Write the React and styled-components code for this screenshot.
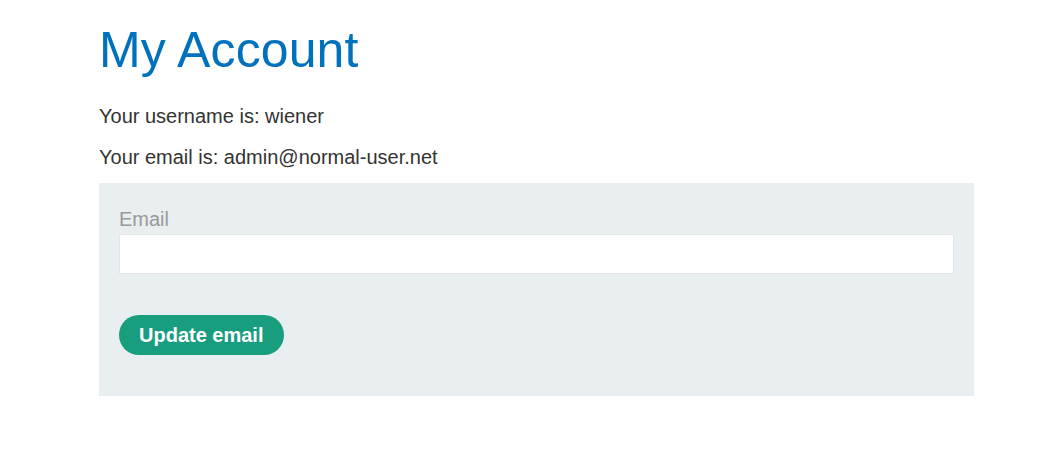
import React from "react";
import styled, { createGlobalStyle } from "styled-components";

const GlobalStyle = createGlobalStyle`
  html, body {
    margin: 0;
    padding: 0;
    background: #fff;
  }

  body {
    font-family: "Liberation Sans", Arial, sans-serif;
    font-size: 20px;
    color: #333332;
  }
`;

export default function App() {
  return (
    <>
      <GlobalStyle />
      <Page>
        <Title>My Account</Title>
        <Line>Your username is: wiener</Line>
        <Line>Your email is: admin@normal-user.net</Line>
        <Form onSubmit={(e) => e.preventDefault()}>
          <Label htmlFor="email">Email</Label>
          <Input id="email" name="email" type="email" />
          <Button type="submit">Update email</Button>
        </Form>
      </Page>
    </>
  );
}

const Page = styled.div`
  width: 875px;
  padding: 22px 0 0 99px;
  display: flex;
  flex-direction: column;
`;

const Title = styled.h1`
  margin: 0 0 27px;
  font-size: 50px;
  font-weight: 400;
  line-height: 56px;
  letter-spacing: 0.1px;
  color: #0071bc;
`;

const Line = styled.p`
  margin: 0 0 19px;
  line-height: 22px;
`;

const Form = styled.form`
  margin-top: -4px;
  background: #e9eef1;
  padding: 25px 20px 41px;
  display: flex;
  flex-direction: column;
  align-items: flex-start;
`;

const Label = styled.label`
  display: block;
  color: #999;
  line-height: 22px;
  margin-bottom: 4px;
`;

const Input = styled.input`
  box-sizing: border-box;
  width: 100%;
  height: 40px;
  margin: 0 0 41px;
  padding: 0 10px;
  border: 1px solid #e2e4e6;
  background: #fff;
  font: inherit;
  outline: none;
`;

const Button = styled.button`
  height: 40px;
  padding: 0 21px 0 20px;
  border: none;
  border-radius: 25px;
  background: #189d7f;
  color: #fff;
  font-family: inherit;
  font-size: 20px;
  font-weight: 700;
  cursor: pointer;
`;
